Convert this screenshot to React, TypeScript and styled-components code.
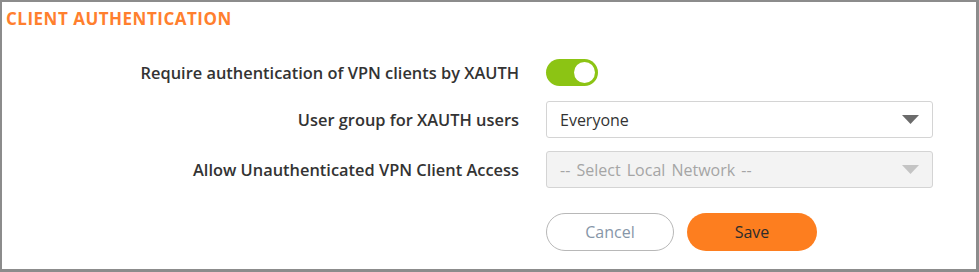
import * as React from "react";
import styled, { createGlobalStyle } from "styled-components";

const Global = createGlobalStyle`
  html, body {
    margin: 0;
    padding: 0;
    background: #ffffff;
  }
  * {
    box-sizing: border-box;
  }
`;

const Panel = styled.div`
  width: 979px;
  height: 272px;
  background: #fff;
  border-style: solid;
  border-color: #8c8c8c;
  border-width: 2px 3px 3px 2px;
  font-family: "Open Sans", Lato, sans-serif;
  color: #333;
`;

const Title = styled.h2`
  margin: 0;
  padding: 7px 0 0 4px;
  font-size: 17px;
  font-weight: 700;
  letter-spacing: 0.5px;
  color: #ff7f2e;
  line-height: 20px;
`;

const Form = styled.div`
  display: grid;
  grid-template-columns: 1fr 387px;
  column-gap: 27px;
  padding: 0 43px 0 0;
  margin-top: 30px;
`;

const Label = styled.div<{ $h: number; $mb: number }>`
  height: ${(p) => p.$h}px;
  margin-bottom: ${(p) => p.$mb}px;
  display: flex;
  align-items: center;
  justify-content: flex-end;
  font-size: 16.4px;
  font-weight: 600;
  color: #333;
  white-space: nowrap;
`;

const Cell = styled.div<{ $h: number; $mb: number }>`
  height: ${(p) => p.$h}px;
  margin-bottom: ${(p) => p.$mb}px;
  display: flex;
  align-items: center;
`;

const Toggle = styled.div<{ $on: boolean }>`
  width: 52px;
  height: 27px;
  border-radius: 14px;
  background: ${(p) => (p.$on ? "#8cc414" : "#ccc")};
  display: flex;
  align-items: center;
  justify-content: ${(p) => (p.$on ? "flex-end" : "flex-start")};
  padding: 0 3px;
`;

const Knob = styled.div`
  width: 21px;
  height: 21px;
  border-radius: 50%;
  background: #fff;
`;

const Select = styled.div<{ $disabled?: boolean }>`
  width: 387px;
  height: 37px;
  border: 1px solid #d4d4d4;
  border-radius: 3px;
  background: ${(p) => (p.$disabled ? "#f3f3f3" : "#fff")};
  color: ${(p) => (p.$disabled ? "#a5a5a5" : "#333")};
  font-size: 16px;
  word-spacing: 2px;
  display: flex;
  align-items: center;
  justify-content: space-between;
  padding: 0 13px 0 13px;
`;

const Buttons = styled.div`
  display: flex;
  gap: 13px;
  align-items: center;
`;

const Button = styled.button<{ $primary?: boolean }>`
  width: ${(p) => (p.$primary ? 130 : 128)}px;
  height: 38px;
  border-radius: 19px;
  font-family: "Open Sans", Lato, sans-serif;
  font-size: 16px;
  cursor: pointer;
  border: ${(p) => (p.$primary ? "none" : "1px solid #b8b8b8")};
  background: ${(p) => (p.$primary ? "#fd7e1f" : "#fff")};
  color: ${(p) => (p.$primary ? "#2c2c2c" : "#8796a8")};
`;

function Caret({ color }: { color: string }) {
  return (
    <svg width="17" height="9" viewBox="0 0 17 9">
      <polygon points="0,0 17,0 8.5,9" fill={color} />
    </svg>
  );
}

export default function App() {
  return (
    <>
      <Global />
      <Panel>
        <Title>CLIENT AUTHENTICATION</Title>
        <Form>
          <Label $h={27} $mb={15}>Require authentication of VPN clients by XAUTH</Label>
          <Cell $h={27} $mb={15}>
            <Toggle $on>
              <Knob />
            </Toggle>
          </Cell>

          <Label $h={37} $mb={13}>User group for XAUTH users</Label>
          <Cell $h={37} $mb={13}>
            <Select>
              Everyone
              <Caret color="#6b6b6b" />
            </Select>
          </Cell>

          <Label $h={37} $mb={25}>Allow Unauthenticated VPN Client Access</Label>
          <Cell $h={37} $mb={25}>
            <Select $disabled>
              -- Select Local Network --
              <Caret color="#c4c4c4" />
            </Select>
          </Cell>

          <div />
          <Buttons>
            <Button>Cancel</Button>
            <Button $primary>Save</Button>
          </Buttons>
        </Form>
      </Panel>
    </>
  );
}
